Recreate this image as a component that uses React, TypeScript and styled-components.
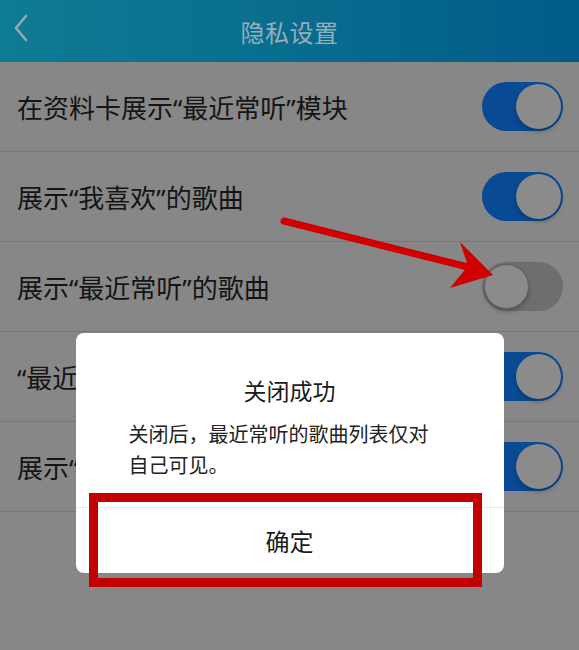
import React, { FunctionComponent } from "react";
import styled, { createGlobalStyle } from "styled-components";

const GlobalStyle = createGlobalStyle`
  html, body {
    margin: 0;
    padding: 0;
    background: #878787;
  }
  * {
    box-sizing: border-box;
  }
`;

type Setting = { label: string; on: boolean };

const settings: Setting[] = [
  { label: "在资料卡展示“最近常听”模块", on: true },
  { label: "展示“我喜欢”的歌曲", on: true },
  { label: "展示“最近常听”的歌曲", on: false },
  { label: "“最近常听”仅展示公开歌曲", on: true },
  { label: "展示“我创建的歌单”", on: true },
];

const App: FunctionComponent = () => (
  <>
    <GlobalStyle />
    <Screen>
      <Header>
        <BackButton aria-label="返回">
          <svg width="16" height="28" viewBox="0 0 16 28" fill="none">
            <path
              d="M13 2 L3 14 L13 26"
              stroke="#93aab6"
              strokeWidth="2.6"
              strokeLinecap="round"
              strokeLinejoin="round"
            />
          </svg>
        </BackButton>
        <Title>隐私设置</Title>
      </Header>

      <List>
        {settings.map((s) => (
          <Row key={s.label}>
            <Label>{s.label}</Label>
            <Track $on={s.on}>
              <Knob $on={s.on} />
            </Track>
          </Row>
        ))}
      </List>

      <Backdrop>
        <Dialog>
          <DialogTitle>关闭成功</DialogTitle>
          <DialogBody>关闭后，最近常听的歌曲列表仅对自己可见。</DialogBody>
          <ConfirmButton>确定</ConfirmButton>
        </Dialog>
      </Backdrop>

      <ArrowLayer width="579" height="650" viewBox="0 0 579 650">
        <line
          x1="284"
          y1="221"
          x2="472"
          y2="268"
          stroke="#d10000"
          strokeWidth="7"
          strokeLinecap="round"
        />
        <path d="M493 275 L460 242 L468 266 L450 288 Z" fill="#d10000" />
      </ArrowLayer>
      <HighlightBox />
    </Screen>
  </>
);

export default App;

const Screen = styled.div`
  position: relative;
  width: 579px;
  height: 650px;
  overflow: hidden;
  background: #878787;
  font-family: "Noto Sans CJK SC", "Noto Sans", sans-serif;
`;

const Header = styled.header`
  height: 62px;
  display: flex;
  align-items: center;
  justify-content: center;
  position: relative;
  background: linear-gradient(90deg, #0f7b94 0%, #086b8e 55%, #005b88 100%);
`;

const BackButton = styled.div`
  position: absolute;
  left: 13px;
  top: 14px;
  display: flex;
`;

const Title = styled.h1`
  margin: 0;
  font-size: 24px;
  font-weight: 400;
  color: #98aebb;
  letter-spacing: 0.5px;
`;

const List = styled.div`
  display: flex;
  flex-direction: column;
`;

const Row = styled.div`
  height: 90px;
  display: flex;
  align-items: center;
  justify-content: space-between;
  padding: 0 16px 0 17px;
  border-bottom: 1px solid #767676;
`;

const Label = styled.span`
  font-family: "Noto Sans", "Noto Sans CJK SC", sans-serif;
  font-size: 26px;
  color: #151515;
`;

const Track = styled.div<{ $on: boolean }>`
  width: 81px;
  height: 49px;
  border-radius: 25px;
  padding: 2px;
  display: flex;
  justify-content: ${({ $on }) => ($on ? "flex-end" : "flex-start")};
  align-items: center;
  background: ${({ $on }) => ($on ? "#094a94" : "#6e6e6e")};
`;

const Knob = styled.div<{ $on: boolean }>`
  width: 45px;
  height: 45px;
  border-radius: 50%;
  background: #8b8b8b;
  border: ${({ $on }) => ($on ? "none" : "1px solid #5e5e5e")};
  box-shadow: 0 3px 4px rgba(0, 0, 0, 0.22);
`;

const Backdrop = styled.div`
  position: absolute;
  inset: 0;
  display: flex;
  flex-direction: column;
  align-items: center;
  padding-top: 333px;
`;

const Dialog = styled.div`
  width: 428px;
  background: #ffffff;
  border-radius: 8px;
  display: flex;
  flex-direction: column;
  padding-top: 41px;
  overflow: hidden;
`;

const DialogTitle = styled.h2`
  margin: 0;
  text-align: center;
  font-size: 23px;
  line-height: 32px;
  font-weight: 400;
  color: #1a1a1a;
`;

const DialogBody = styled.p`
  margin: 12px 0 0;
  padding: 0 60px 0 53px;
  font-size: 20px;
  line-height: 31px;
  color: #222222;
`;

const ConfirmButton = styled.div`
  margin-top: 27px;
  height: 66px;
  border-top: 1px solid #ececec;
  display: flex;
  align-items: center;
  justify-content: center;
  font-size: 24px;
  color: #1a1a1a;
`;

const ArrowLayer = styled.svg`
  position: absolute;
  left: 0;
  top: 0;
  pointer-events: none;
`;

const HighlightBox = styled.div`
  position: absolute;
  left: 89px;
  top: 493px;
  width: 393px;
  height: 94px;
  border: 9px solid #c30000;
  pointer-events: none;
`;
